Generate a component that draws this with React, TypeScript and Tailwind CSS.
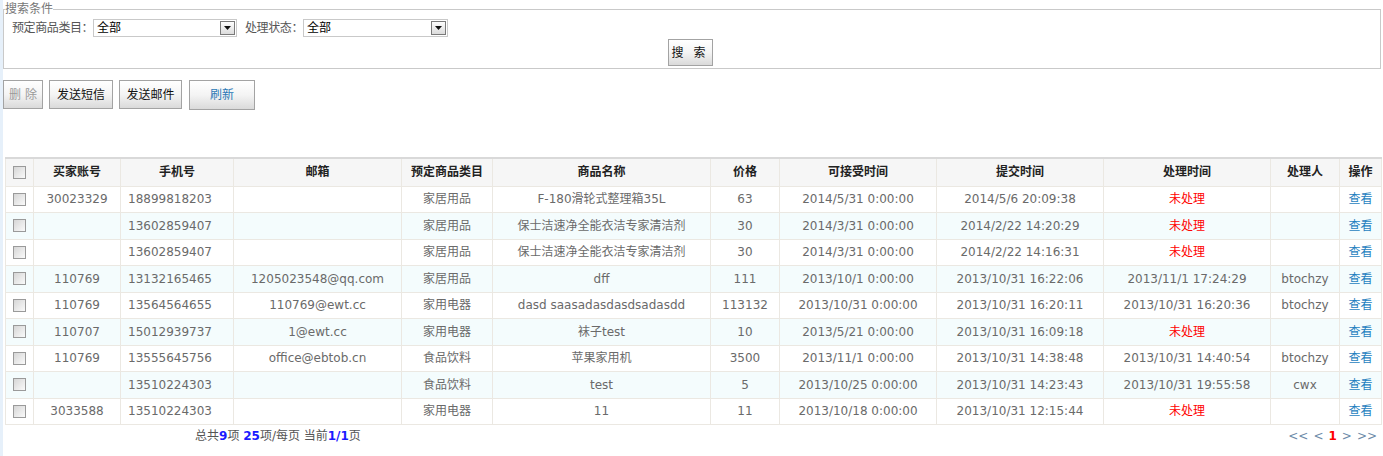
import type { ReactNode } from 'react'

const FONT = '"DejaVu Sans", "Noto Sans CJK SC", sans-serif'

type Row = {
  buyer: string
  phone: string
  email: string
  category: string
  name: string
  price: string
  accept: string
  submit: string
  handled: string
  handler: string
}

const ROWS: Row[] = [
  { buyer: '30023329', phone: '18899818203', email: '', category: '家居用品', name: 'F-180滑轮式整理箱35L', price: '63', accept: '2014/5/31 0:00:00', submit: '2014/5/6 20:09:38', handled: '', handler: '' },
  { buyer: '', phone: '13602859407', email: '', category: '家居用品', name: '保士洁速净全能衣洁专家清洁剂', price: '30', accept: '2014/3/31 0:00:00', submit: '2014/2/22 14:20:29', handled: '', handler: '' },
  { buyer: '', phone: '13602859407', email: '', category: '家居用品', name: '保士洁速净全能衣洁专家清洁剂', price: '30', accept: '2014/3/31 0:00:00', submit: '2014/2/22 14:16:31', handled: '', handler: '' },
  { buyer: '110769', phone: '13132165465', email: '1205023548@qq.com', category: '家居用品', name: 'dff', price: '111', accept: '2013/10/1 0:00:00', submit: '2013/10/31 16:22:06', handled: '2013/11/1 17:24:29', handler: 'btochzy' },
  { buyer: '110769', phone: '13564564655', email: '110769@ewt.cc', category: '家用电器', name: 'dasd saasadasdasdsadasdd', price: '113132', accept: '2013/10/31 0:00:00', submit: '2013/10/31 16:20:11', handled: '2013/10/31 16:20:36', handler: 'btochzy' },
  { buyer: '110707', phone: '15012939737', email: '1@ewt.cc', category: '家用电器', name: '袜子test', price: '10', accept: '2013/5/21 0:00:00', submit: '2013/10/31 16:09:18', handled: '', handler: '' },
  { buyer: '110769', phone: '13555645756', email: 'office@ebtob.cn', category: '食品饮料', name: '苹果家用机', price: '3500', accept: '2013/11/1 0:00:00', submit: '2013/10/31 14:38:48', handled: '2013/10/31 14:40:54', handler: 'btochzy' },
  { buyer: '', phone: '13510224303', email: '', category: '食品饮料', name: 'test', price: '5', accept: '2013/10/25 0:00:00', submit: '2013/10/31 14:23:43', handled: '2013/10/31 19:55:58', handler: 'cwx' },
  { buyer: '3033588', phone: '13510224303', email: '', category: '家用电器', name: '11', price: '11', accept: '2013/10/18 0:00:00', submit: '2013/10/31 12:15:44', handled: '', handler: '' },
]

const COLS = [28, 87, 113, 168, 91, 218, 69, 157, 167, 167, 69, 42]
const HEADERS = ['买家账号', '手机号', '邮箱', '预定商品类目', '商品名称', '价格', '可接受时间', '提交时间', '处理时间', '处理人', '操作']

function Checkbox() {
  return (
    <span className="mx-auto block h-[13px] w-[13px] border border-[#9a9a9a] bg-gradient-to-br from-[#d6d6d6] to-[#fafafa]" />
  )
}

function Select({ width }: { width: number }) {
  return (
    <div
      className="flex h-[18px] shrink-0 items-center justify-between border border-[#c9c9c9] bg-white pl-[3px] pr-[1px] text-[12px] text-black"
      style={{ width }}
    >
      <span>全部</span>
      <span className="flex h-[14px] w-[15px] items-center justify-center border border-[#7a7a7a] bg-gradient-to-b from-[#fdfdfd] to-[#dcdcdc]">
        <svg width="7" height="4" viewBox="0 0 7 4">
          <path d="M0 0h7L3.5 4z" fill="#111" />
        </svg>
      </span>
    </div>
  )
}

function Btn({ children, className = '' }: { children: ReactNode; className?: string }) {
  return (
    <button
      type="button"
      className={`flex items-center justify-center border border-[#a3a3a3] bg-gradient-to-b from-white via-[#f4f4f4] to-[#dadada] text-[12px] ${className}`}
    >
      {children}
    </button>
  )
}

function Cell({ children, className = '' }: { children?: ReactNode; className?: string }) {
  return (
    <td className={`h-[26.5px] border border-[#ebe8e2] p-0 text-center text-[12px] text-[#6a6a6a] ${className}`}>
      {children}
    </td>
  )
}

export default function App() {
  return (
    <div className="flex min-h-[456px] w-[1383px] bg-white" style={{ fontFamily: FONT }}>
      <div className="w-[3px] shrink-0 bg-[#e6f0fa]" />
      <div className="w-[1378px] pt-[1px]">
        <fieldset className="border border-[#c9c9c9] pb-[2px]">
          <legend className="ml-[1px] text-[12px] leading-[16px] text-[#777]">搜索条件</legend>
          <div className="mt-[2px] flex items-center whitespace-nowrap pl-[8px] text-[12px] text-[#555]">
            <span className="w-[81px] shrink-0 tracking-[-0.4px]">预定商品类目：</span>
            <Select width={144} />
            <span className="ml-[8px] w-[58px] shrink-0 tracking-[-0.4px]">处理状态：</span>
            <Select width={145} />
          </div>
          <div className="mt-[2px] flex justify-center pr-[4px]">
            <Btn className="h-[27px] w-[45px] tracking-[3px] text-[#111]">搜 索</Btn>
          </div>
        </fieldset>

        <div className="mt-[11px] flex items-start gap-[6px]">
          <Btn className="h-[29px] w-[40px] text-[#9a9a9a]">删 除</Btn>
          <Btn className="h-[29px] w-[64px] text-[#111]">发送短信</Btn>
          <Btn className="h-[29px] w-[63px] text-[#111]">发送邮件</Btn>
          <Btn className="ml-[1px] h-[30px] w-[66px] text-[#2a78b6]">刷新</Btn>
        </div>

        <table className="mt-[47px] ml-[2px] w-[1376px] table-fixed border-collapse border-t-2 border-t-[#d9d9d9]">
          <colgroup>
            {COLS.map((w, i) => (
              <col key={i} style={{ width: w }} />
            ))}
          </colgroup>
          <thead>
            <tr className="bg-[#f6f6f6]">
              <th className="h-[28px] border border-[#ebe8e2] border-t-[#d9d9d9] p-0">
                <Checkbox />
              </th>
              {HEADERS.map((h) => (
                <th
                  key={h}
                  className="h-[28px] border border-[#ebe8e2] border-t-[#d9d9d9] p-0 text-center text-[12px] font-bold text-[#222]"
                >
                  {h}
                </th>
              ))}
            </tr>
          </thead>
          <tbody>
            {ROWS.map((r, i) => (
              <tr key={i} className={i % 2 === 1 ? 'bg-[#f4fcfd]' : 'bg-white'}>
                <Cell>
                  <Checkbox />
                </Cell>
                <Cell>{r.buyer}</Cell>
                <Cell className="pl-[7px] !text-left">{r.phone}</Cell>
                <Cell>{r.email}</Cell>
                <Cell>{r.category}</Cell>
                <Cell>{r.name}</Cell>
                <Cell>{r.price}</Cell>
                <Cell>{r.accept}</Cell>
                <Cell>{r.submit}</Cell>
                <Cell>{r.handled ? r.handled : <span className="text-[#f00]">未处理</span>}</Cell>
                <Cell>{r.handler}</Cell>
                <Cell>
                  <span className="text-[#1f7fc0]">查看</span>
                </Cell>
              </tr>
            ))}
          </tbody>
        </table>

        <div className="mt-[1px] flex items-center justify-between text-[12px] leading-[20px]">
          <div className="pl-[192px] text-[#555]">
            总共<b className="text-[#1a1aff]">9</b>项 <b className="text-[#1a1aff]">25</b>项/每页 当前
            <b className="text-[#1a1aff]">1/1</b>页
          </div>
          <div className="flex gap-[5px] pr-[4px] text-[#6c8aa8]">
            <span>&lt;&lt;</span>
            <span>&lt;</span>
            <b className="text-[#f00]">1</b>
            <span>&gt;</span>
            <span>&gt;&gt;</span>
          </div>
        </div>
      </div>
    </div>
  )
}
